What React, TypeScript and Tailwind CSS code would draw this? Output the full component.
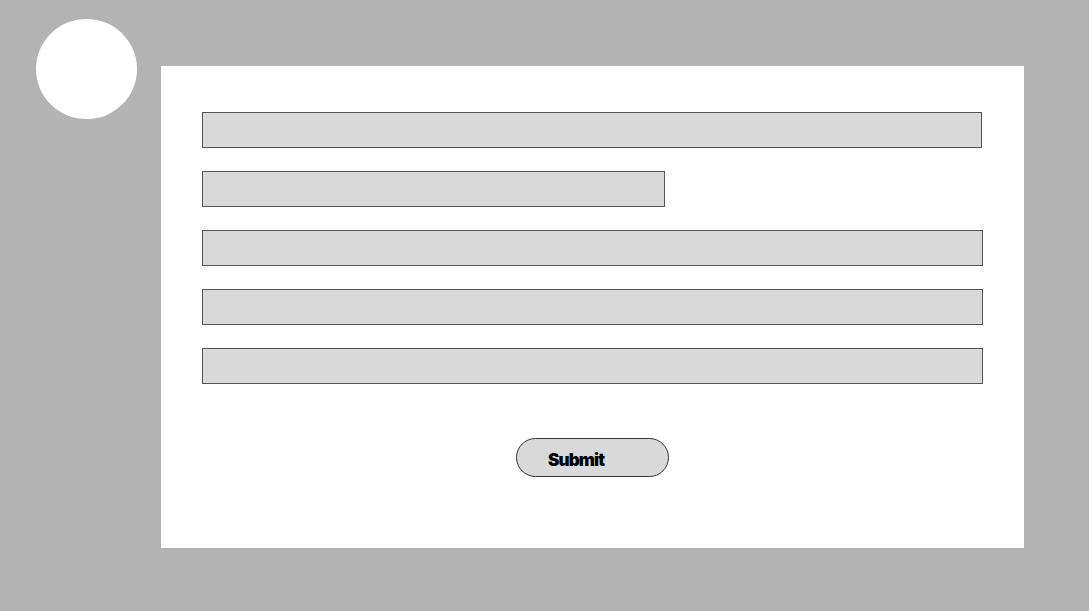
import React from 'react';

const fields = [
  { w: 'w-[780px]' },
  { w: 'w-[463px]' },
  { w: 'w-[781px]' },
  { w: 'w-[781px]' },
  { w: 'w-[781px]' },
];

const App: React.FC = () => {
  return (
    <div className="w-[1089px] h-[611px] bg-[#b3b3b3] flex items-start overflow-hidden">
      {/* Avatar */}
      <div className="ml-[36px] mt-[19px] w-[101px] h-[100px] rounded-full bg-white shrink-0" />

      {/* Form card */}
      <div className="ml-[24px] mt-[66px] w-[863px] h-[482px] bg-white shrink-0 pl-[41px] pt-[46px] flex flex-col">
        <div className="flex flex-col gap-[23px]">
          {fields.map((f, i) => (
            <div
              key={i}
              className={`${f.w} h-[36px] bg-[#d9d9d9] border border-[#555555]`}
            />
          ))}
        </div>

        <div className="w-[781px] flex justify-center mt-[54px]">
          <button
            className="w-[153px] h-[39px] rounded-full bg-[#d9d9d9] border border-[#333333] text-left pl-[31px] pt-[6px] text-[17px] font-black tracking-[-0.05em] text-black"
            style={{ fontFamily: 'Inter, "Liberation Sans", sans-serif' }}
          >
            Submit
          </button>
        </div>
      </div>
    </div>
  );
};

export default App;
